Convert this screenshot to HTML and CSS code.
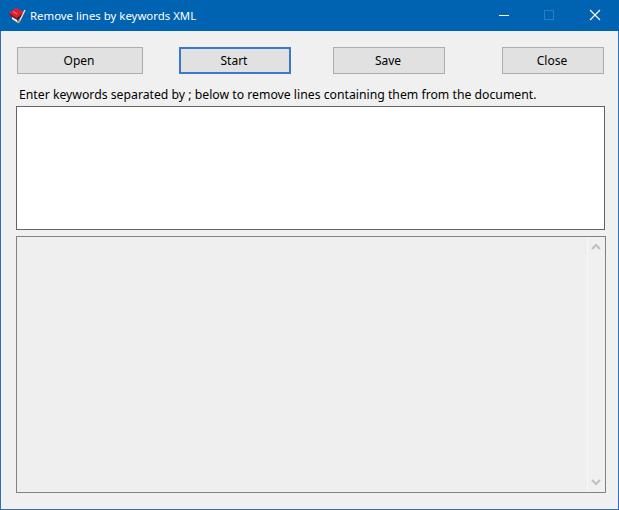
FILE: index.html
```html
<!DOCTYPE html>
<html lang="en">
<head>
<meta charset="utf-8">
<title>Remove lines by keywords XML</title>
<link rel="stylesheet" href="styles.css">
</head>
<body>
<div class="window">
  <header class="titlebar">
    <svg class="app-icon" width="17" height="17" viewBox="0 0 17 17">
      <path d="M0 6 L7 1 L15 5 L8 11 Z" fill="#e0202e"/>
      <path d="M0 6 L8 11 L8 13 L1 9 Z" fill="#96131f"/>
      <path d="M3 10 L8 13 L9 16 L3 12 Z" fill="#f4f4f4"/>
      <path d="M8 11 L15 5 L14 8 L8 13 Z" fill="#5d0c14"/>
      <path d="M10 15 L16 3" stroke="#f0e6d0" stroke-width="1.4"/>
      <path d="M9 16 L11 13" stroke="#d8a040" stroke-width="1.6"/>
      <path d="M4 4.5 L8 7" stroke="#f4808a" stroke-width="1"/>
    </svg>
    <span class="title">Remove lines by keywords XML</span>
    <div class="controls">
      <span class="ctl"><svg width="12" height="12" viewBox="0 0 12 12"><path d="M2 6.5H12" stroke="#fff" stroke-width="1"/></svg></span>
      <span class="ctl"><svg width="12" height="12" viewBox="0 0 12 12"><rect x="1.5" y="1.5" width="9" height="9" fill="none" stroke="#2a7fc4"/></svg></span>
      <span class="ctl"><svg width="12" height="12" viewBox="0 0 12 12"><path d="M1 1L11 11M11 1L1 11" stroke="#fff" stroke-width="1.1"/></svg></span>
    </div>
  </header>
  <main class="content">
    <div class="toolbar">
      <button class="btn btn-open">Open</button>
      <button class="btn btn-start">Start</button>
      <button class="btn btn-save">Save</button>
      <button class="btn btn-close">Close</button>
    </div>
    <p class="hint">Enter keywords separated by ; below to remove lines containing them from the document.</p>
    <div class="keywords"></div>
    <div class="output">
      <div class="scrollbar">
        <svg width="10" height="8" viewBox="0 0 10 8"><path d="M1 6L5 2L9 6" fill="none" stroke="#c0c0c0" stroke-width="2"/></svg>
        <svg width="10" height="8" viewBox="0 0 10 8"><path d="M1 2L5 6L9 2" fill="none" stroke="#c0c0c0" stroke-width="2"/></svg>
      </div>
    </div>
  </main>
</div>
</body>
</html>
```
FILE: styles.css
```css
* { box-sizing: border-box; }
html, body { margin: 0; height: 100%; }
body { font-family: "Noto Sans", "DejaVu Sans", sans-serif; font-size: 12px; color: #000; }
.window {
  width: 619px; height: 510px;
  display: flex; flex-direction: column;
  background: #f0f0f0;
  border: 1px solid #2f6fb5;
  border-top: 0;
}
.titlebar {
  height: 31px; flex: none;
  margin: 0 -1px;
  background: #0063b1;
  display: flex; align-items: center;
  padding-left: 9px;
  color: #fff;
}
.app-icon { flex: none; }
.title { margin-left: 4px; font-size: 11.4px; }
.controls { margin-left: auto; display: flex; align-self: flex-start; }
.ctl { width: 46px; height: 30px; display: flex; align-items: center; justify-content: center; }
.ctl:last-child { margin-right: 1px; }
.content { flex: 1; display: flex; flex-direction: column; padding: 16px 13px 16px 15px; }
.toolbar { display: flex; height: 27px; padding-left: 1px; }
.btn {
  font: inherit; color: #000;
  height: 27px; padding: 0 2px 0 0;
  background: #e1e1e1;
  border: 1px solid #adadad;
  border-radius: 0;
}
.btn-open { width: 126px; }
.btn-start { width: 112px; margin-left: 36px; border: 2px solid #3b78c9; }
.btn-save { width: 112px; margin-left: 42px; }
.btn-close { width: 102px; margin-left: 57px; }
.hint { margin: 0; height: 32px; padding: 13px 0 0 3px; font-size: 12.24px; line-height: 16px; white-space: nowrap; }
.keywords { height: 124px; width: 589px; background: #fff; border: 1px solid #646464; }
.output {
  margin-top: 6px; height: 257px; width: 590px;
  border: 1px solid #828282;
  background: #efefef;
  display: flex; justify-content: flex-end;
}
.scrollbar {
  width: 17px; margin-right: 1px; background: #f0f0f0; border-left: 1px solid #f8f8f8;
  display: flex; flex-direction: column; justify-content: space-between; align-items: center;
  padding: 6px 0;
}
```
